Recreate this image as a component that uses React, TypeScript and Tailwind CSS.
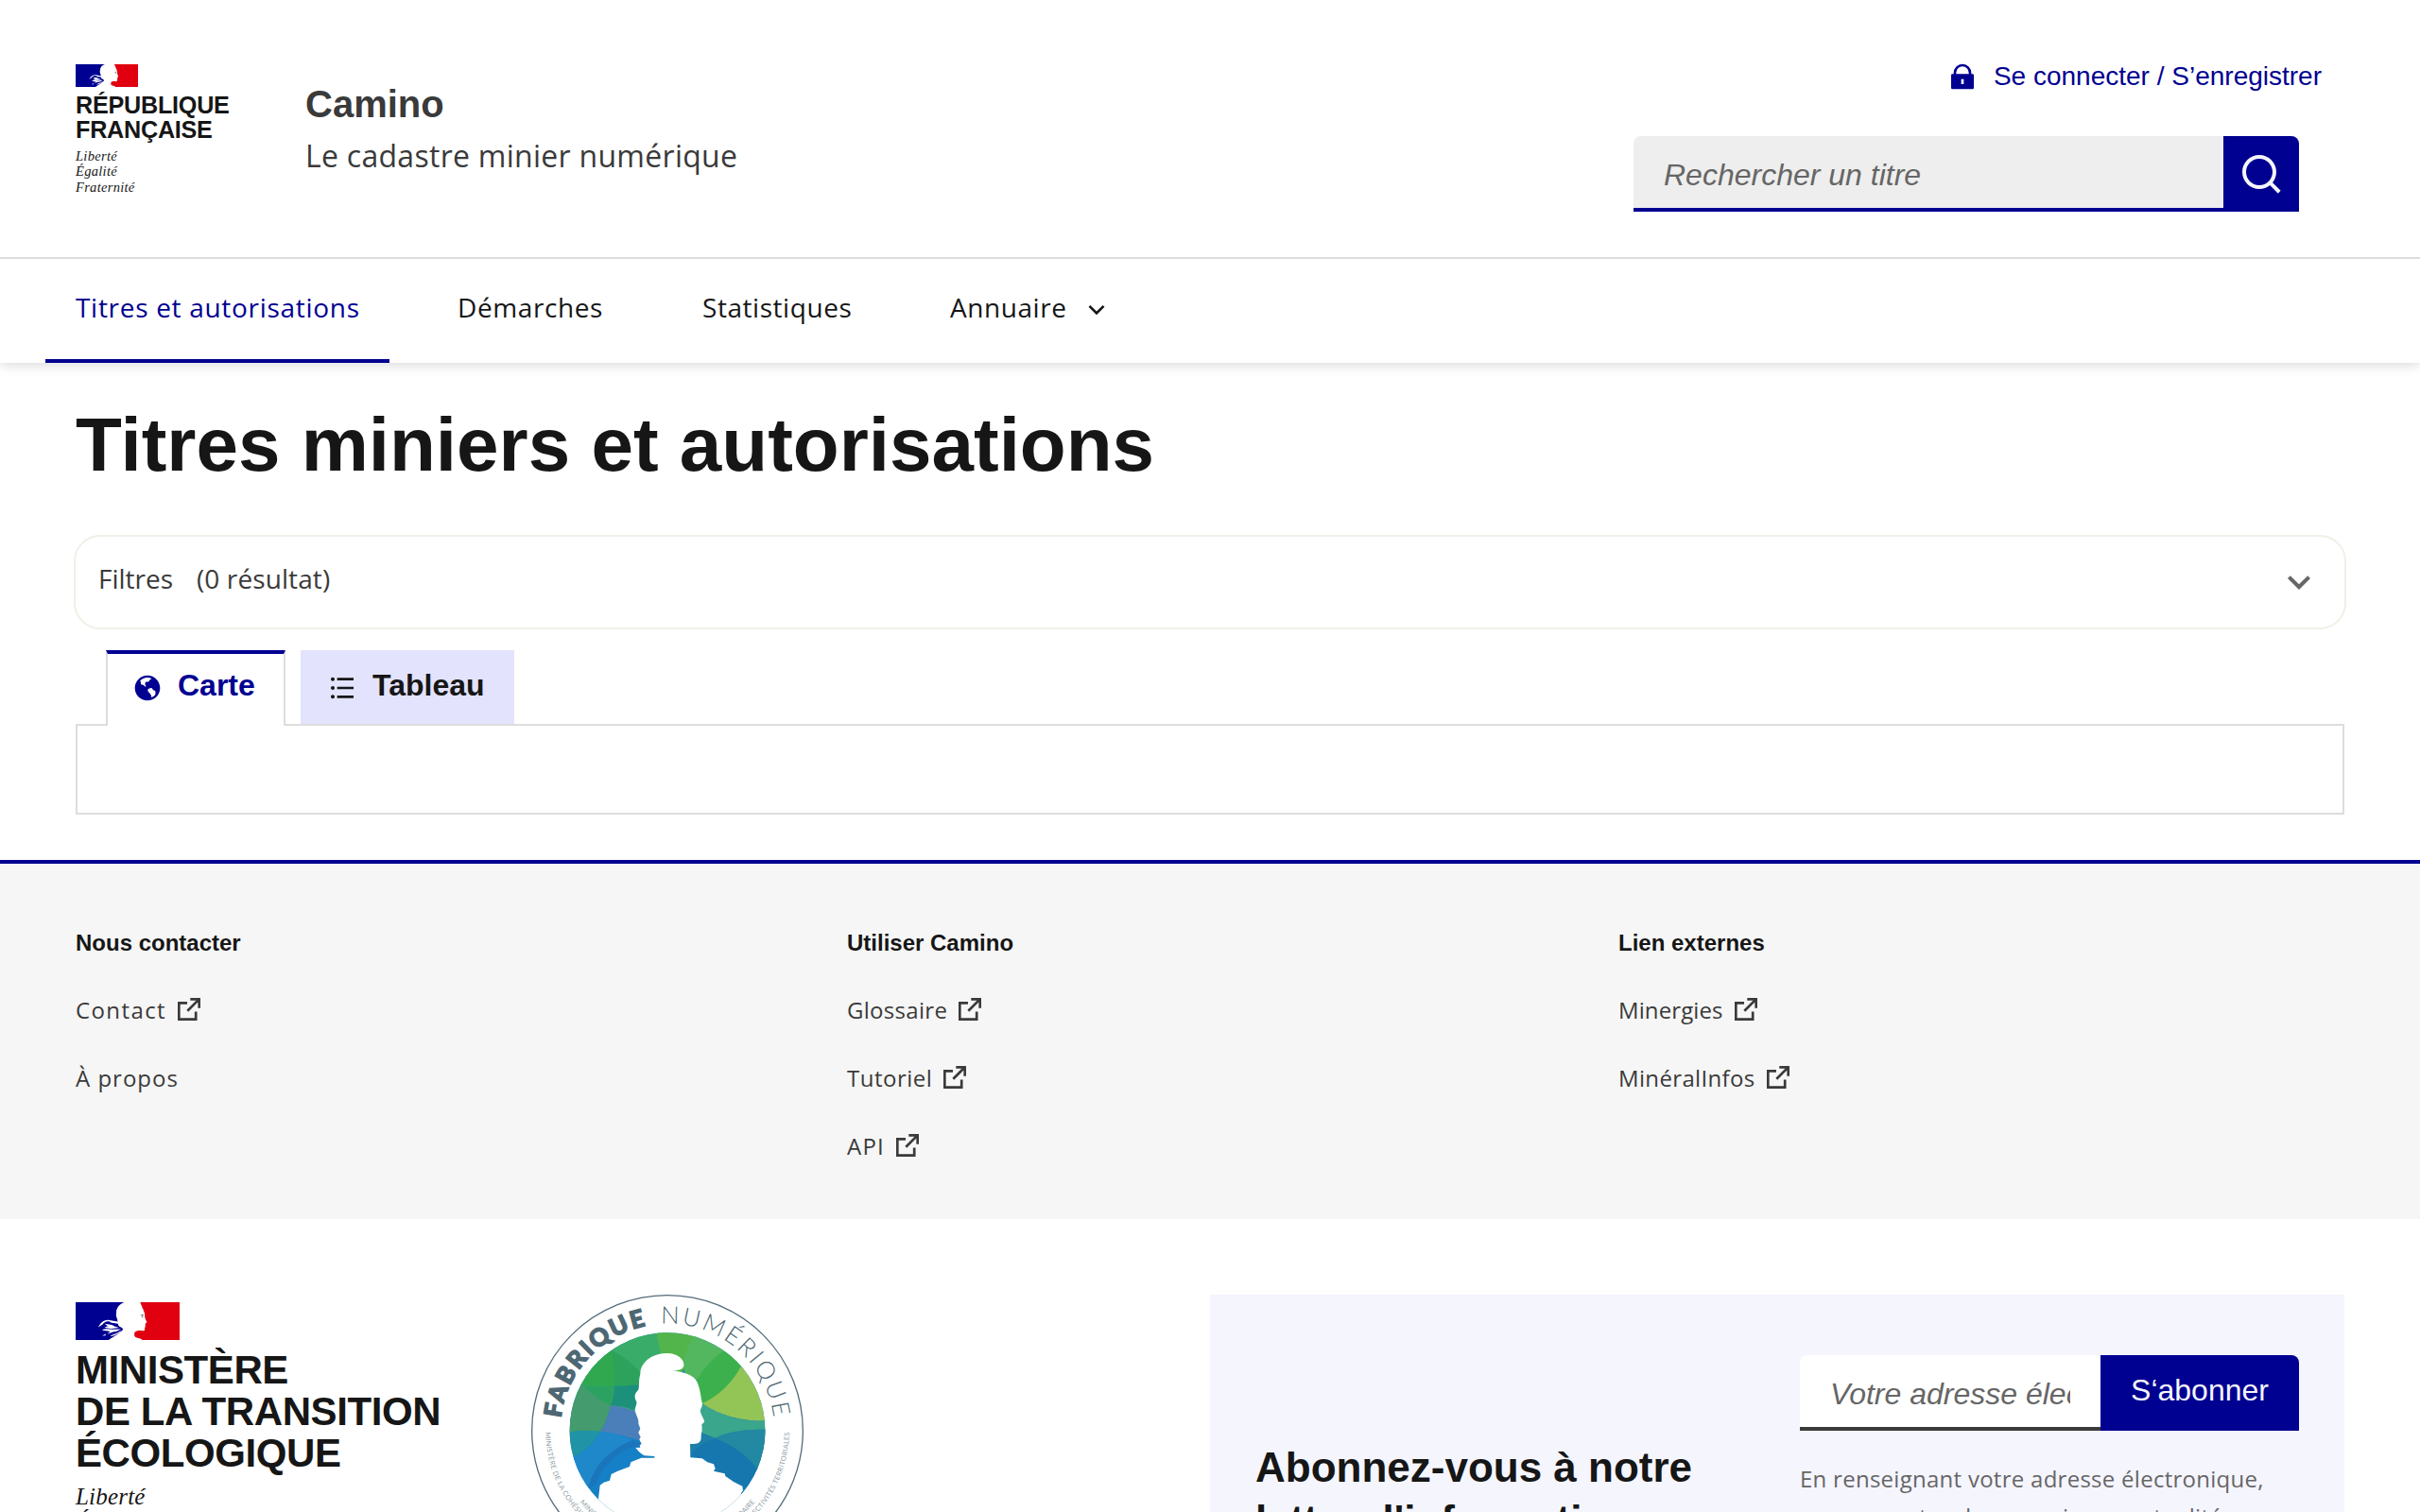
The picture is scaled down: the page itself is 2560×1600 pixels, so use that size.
import React from "react";
import { RiArrowDownSLine, RiEarthFill, RiListUnordered, RiSearchLine } from "react-icons/ri";

function Marianne({ className }: { className: string }) {
  return (
    <svg viewBox="0 0 110 40" className={className} aria-hidden="true">
      <path fill="#000091" d="M0 0H52L60 20L50 40H0Z" />
      <path fill="#e1000f" d="M66 0H110V40H58V20Z" />
      <path
        fill="#fff"
        d="M51.5 0C48 1.5 45 3.500 44 6.500C42.500 9 43.500 10.500 42.800 13C42.500 15.500 44.500 17.500 44.300 19.500C45.500 22.500 44 24.500 47 26C49 27 50.500 28 50 28.800C48 32.500 40 36.500 35 40H70.500C69.500 38.500 67 38.300 64.500 37.500C61.500 36.800 62 33.500 62.500 31.800C64 29.800 68 29.800 70.500 30.300C73.500 30.500 73.500 29 73 27.500C73.200 26.500 74.200 26 73.600 25C74 24 73.600 23 74 22.300C76 21.800 75 20.500 74.400 19C73 16.500 73.200 15 73.200 13C72.800 10.500 72 9 71.500 7.500C70 5.500 70.500 4.500 69.500 3C68.500 2 69.500 1 68 0Z"
      />
      <path
        fill="#fff"
        d="M24 26.500C26 22.500 29 18.500 34.500 18.700C38 19 42 20.500 45.500 20.500L46 23C42 22 38 22.500 36 20.500C33 19.500 30 21 28.500 23.500ZM30.500 22.500C34 24 37 22.500 41 25.500L46 27L38 28C35 27.500 33 27.800 30.500 26.500L34 25.500ZM28 29.500C32 27.300 35.500 29 40 28.700L48 28.500L43 31C39 31 37 32.500 33.500 33.500L36.500 31C33 30.300 31 30.500 28 29.500ZM28 35.500L32 33.500L31.500 35.300ZM37 35.500C40 34 45 32.500 48 30L47.500 31.500C44 34 41 35.500 37 36Z"
      />
      <path fill="#808080" d="M68.500 13.300L72 13V14L70.500 14.200L71.700 15.500L70 17L70.300 15.300Z" />
    </svg>
  );
}

function ExternalIcon() {
  return (
    <svg viewBox="0 0 24 24" className="mb-0.5 ml-3 size-6 shrink-0" fill="none" stroke="currentColor" strokeWidth="2.7" aria-hidden="true">
      <path d="M10 5.300H1.300V22.700H19.200V14.500M13.300 1.300H22.700V10.700M22.400 1.600L10.300 13.700" />
    </svg>
  );
}

function LockIcon() {
  return (
    <svg viewBox="0 0 24 24" className="size-8" fill="currentColor" aria-hidden="true">
      <path d="M19 10h1a1 1 0 0 1 1 1v10a1 1 0 0 1-1 1H4a1 1 0 0 1-1-1V11a1 1 0 0 1 1-1h1V9a7 7 0 1 1 14 0v1zm-2 0V9A5 5 0 0 0 7 9v1h10zm-6 4v4h2v-4h-2z" />
    </svg>
  );
}

function FabriqueLogo() {
  return (
    <svg viewBox="66 60 864 864" className="ml-[96px] size-[288px] shrink-0" role="img" aria-label="Fabrique numérique">
      <defs>
        <clipPath id="disc">
          <circle cx="498" cy="491" r="310" />
        </clipPath>
        <path id="arcTop" d="M158 492A340 340 0 0 1 838 492" />
        <path id="arcOuter" d="M111 492A387 387 0 0 0 885 492" />
        <path id="arcInner" d="M139 492A359 359 0 0 0 857 492" />
      </defs>
      <circle cx="498" cy="492" r="430" fill="none" stroke="#546e7a" strokeWidth="4" />
      <g clipPath="url(#disc)">
        <rect x="180" y="170" width="640" height="640" fill="#1580c2" />
        <path fill="#3aac6a" d="M180 170H500V430H180Z" />
        <path fill="#52b54b" d="M462 170H600L540 320L490 290C478 250 470 220 464 181Z" />
        <path fill="#52b75f" d="M586 170H830V330H560L548 290C552 250 565 215 586 193Z" />
        <path fill="#3cb04c" d="M680 236C640 260 600 310 580 350L608 405L640 420L732 290L740 200Z" />
        <path fill="#93c456" d="M608 406C660 380 700 345 730 290L820 260V460C740 465 665 445 608 406Z" />
        <path fill="#3aa68b" d="M580 405H608C665 445 740 465 810 460V492C735 490 680 500 640 520L590 505Z" />
        <path fill="#1f7fa6" d="M560 500L606 498L650 515C700 490 760 488 812 488V620L780 618Z" />
        <path fill="#2388a2" d="M650 517C700 492 760 488 812 488V620L785 614C750 570 700 535 650 517Z" />
        <path fill="#1577ae" d="M560 580C585 545 615 528 650 517C705 538 750 570 785 616L750 700H560Z" />
        <path fill="#1f7fa6" d="M560 500L606 498L650 517C615 528 585 545 560 580Z" />
        <path fill="#2fa84f" d="M180 350V180L322 238C345 300 332 345 322 352C290 350 255 350 228 345Z" />
        <path fill="#2ca25c" d="M322 238C360 255 395 285 420 315V345C385 348 350 350 328 352C334 315 332 275 322 238Z" />
        <path fill="#1c907a" d="M328 350C350 350 380 348 420 345V440C385 420 350 413 318 412C326 390 330 370 328 350Z" />
        <path fill="#449b6e" d="M228 345C245 365 280 395 318 412C310 445 300 475 285 495C250 490 210 492 180 498V345Z" />
        <path fill="#2ca262" d="M228 345C260 352 295 352 328 350C330 372 326 392 318 412C280 395 250 370 228 345Z" />
        <path fill="#4a7fb9" d="M318 412C355 415 385 425 420 440V525C380 515 340 500 285 495C300 475 310 445 318 412Z" />
        <path fill="#2094a6" d="M180 498C215 490 250 490 285 495C265 530 235 562 200 575L180 560Z" />
        <path fill="#1f88cb" d="M285 495C325 500 355 505 388 522C330 550 265 600 245 680L180 620L200 575C240 560 268 530 285 495Z" />
        <path fill="#1b75ba" d="M388 522L425 535V590L300 640L245 680C262 600 320 548 388 522Z" />
        <path fill="#1580c8" d="M398 540L425 560V590L300 640L265 690C275 620 330 560 398 540Z" />
        <path
          fill="#fff"
          d="M412 312C412 278 445 247 495 246C535 245 553 270 550 286C546 302 525 302 506 299C535 303 570 308 588 330C602 352 603 380 608 402C612 415 600 425 603 432C606 445 615 455 615 463C614 470 606 468 607 476C610 482 606 486 608 492C606 500 605 505 605 512C605 530 595 535 570 534L571 577L608 580L625 592L645 598L650 612L645 620L680 628L682 636L708 654L736 668L738 682L732 690L760 830H240L279 708L284 665L296 656L315 650L320 630L340 620L378 606L382 592L415 578L457 578V573L425 571C410 563 402 552 397 546L412 545L410 538L416 534L409 520L413 512L406 498L412 485L406 470C408 455 400 445 396 432C392 420 402 412 400 400C392 385 394 375 402 367C412 360 404 340 412 312Z"
        />
      </g>
      <path d="M279 708A310 310 0 0 0 735 692" fill="none" stroke="#d9dee0" strokeWidth="1" />
      <g fill="#4d6773">
        <text fontFamily="Lato, sans-serif" fontWeight="900" fontSize="77" stroke="#4d6773" strokeWidth="4" textLength="425" lengthAdjust="spacing">
          <textPath href="#arcTop" startOffset="40" textLength="425" lengthAdjust="spacing">FABRIQUE</textPath>
        </text>
        <text fontFamily="Lato, sans-serif" fontWeight="300" fontSize="77" textLength="512" lengthAdjust="spacing">
          <textPath href="#arcTop" startOffset="513" textLength="512" lengthAdjust="spacing">NUMÉRIQUE</textPath>
        </text>
      </g>
      <g fill="#8f9da4" fontFamily="Lato, sans-serif" fontSize="22">
        <text textLength="1205" lengthAdjust="spacing">
          <textPath href="#arcOuter" startOffset="5" textLength="1205" lengthAdjust="spacing">
            MINISTÈRE DE LA COHÉSION DES TERRITOIRES ET DES RELATIONS AVEC LES COLLECTIVITÉS TERRITORIALES
          </textPath>
        </text>
        <text textLength="636" lengthAdjust="spacing">
          <textPath href="#arcInner" startOffset="246" textLength="636" lengthAdjust="spacing">
            MINISTÈRE DE LA TRANSITION ÉCOLOGIQUE ET SOLIDAIRE
          </textPath>
        </text>
      </g>
    </svg>
  );
}

const body = "font-['Open_Sans',sans-serif]";

type FooterLink = { label: string; external: boolean; spacing: string };

const columns: { title: string; links: FooterLink[] }[] = [
  {
    title: "Nous contacter",
    links: [
      { label: "Contact", external: true, spacing: "tracking-[1.4px]" },
      { label: "À propos", external: false, spacing: "tracking-[1px]" },
    ],
  },
  {
    title: "Utiliser Camino",
    links: [
      { label: "Glossaire", external: true, spacing: "tracking-[0.3px]" },
      { label: "Tutoriel", external: true, spacing: "tracking-[0.5px]" },
      { label: "API", external: true, spacing: "tracking-[1.2px]" },
    ],
  },
  {
    title: "Lien externes",
    links: [
      { label: "Minergies", external: true, spacing: "tracking-[0.1px]" },
      { label: "MinéralInfos", external: true, spacing: "tracking-[0.35px]" },
    ],
  },
];

function Header() {
  return (
    <header className="flex h-[274px] items-start border-b-2 border-[#dddddd] pl-20 pr-[104px]">
      <div className="mt-[68px] w-[243px] shrink-0 text-[#161616]">
        <Marianne className="h-6 w-[66px]" />
        <p className="mt-1.5 text-[25.2px] font-bold leading-[26px] tracking-[-0.252px]">
          RÉPUBLIQUE
          <br />
          FRANÇAISE
        </p>
        <p className="mt-[7px] font-['Liberation_Serif',serif] text-[14.5px] italic leading-[16.300px] tracking-[0.3px]">
          Liberté
          <br />
          Égalité
          <br />
          Fraternité
        </p>
      </div>
      <div className="mt-[82px] text-[#3a3a3a]">
        <p className="text-[40px] font-bold leading-[56px]">Camino</p>
        <p className={`${body} mt-[3px] text-[32px] leading-[48px] tracking-[0.28px]`}>Le cadastre minier numérique</p>
      </div>
      <div className="ml-auto mt-[57px] flex flex-col items-end">
        <a className="flex items-center gap-[17px] text-[28px] leading-[48px] text-[#000091]">
          <LockIcon />
          Se connecter / S’enregistrer
        </a>
        <div className="mr-6 mt-[39px] flex h-20 w-[704px] overflow-hidden rounded-t-lg">
          <div className="flex-1 border-b-4 border-[#000091] bg-[#eeeeee] pl-8 text-[32px] italic leading-[82px] text-[#666666]">
            Rechercher un titre
          </div>
          <button className="flex w-20 items-center justify-center bg-[#000091] text-[#f5f5fe]">
            <RiSearchLine className="size-12" />
          </button>
        </div>
      </div>
    </header>
  );
}

function Nav() {
  return (
    <nav className={`${body} relative flex h-[110px] gap-10 bg-white pl-12 text-[28px] leading-[103px] text-[#161616] shadow-[0_2px_12px_rgba(0,0,18,0.16)] [clip-path:inset(0_0_-20px_0)]`}>
      <a className="w-[364px] whitespace-nowrap border-b-4 border-[#000091] pl-8 tracking-[0.7px] text-[#000091]">Titres et autorisations</a>
      <a className="w-[218px] pl-8 tracking-[0.600px]">Démarches</a>
      <a className="w-[222px] pl-[33px] tracking-[0.55px]">Statistiques</a>
      <a className="flex pl-[33px] tracking-[0.55px]">
        Annuaire
        <RiArrowDownSLine className="ml-4 mt-[38px] size-8" />
      </a>
    </nav>
  );
}

function Footer() {
  return (
    <footer>
      <div className="mt-12 grid h-[380px] grid-cols-3 gap-x-12 border-t-4 border-[#000091] bg-[#f6f6f6] px-20 pt-16">
        {columns.map((c) => (
          <div key={c.title}>
            <h3 className="text-2xl font-bold leading-10 text-[#161616]">{c.title}</h3>
            <ul className={`${body} mt-[31px] flex flex-col gap-8 text-2xl leading-10 text-[#3a3a3a]`}>
              {c.links.map((l) => (
                <li key={l.label} className="flex h-10 items-center">
                  <span className={l.spacing}>{l.label}</span>
                  {l.external && <ExternalIcon />}
                </li>
              ))}
            </ul>
          </div>
        ))}
      </div>
      <div className="mt-20 flex items-start px-20">
        <div className="mt-2 w-[386px] shrink-0 text-[#161616]">
          <Marianne className="h-10 w-[110px]" />
          <p className="mt-2.5 whitespace-nowrap text-[42px] font-bold leading-[44px] tracking-[-0.42px]">
            MINISTÈRE
            <br />
            DE LA TRANSITION
            <br />
            ÉCOLOGIQUE
          </p>
          <p className="mt-2.5 font-['Liberation_Serif',serif] text-[25px] italic leading-[27px] tracking-[0.2px]">
            Liberté
            <br />
            Égalité
            <br />
            Fraternité
          </p>
        </div>
        <FabriqueLogo />
        <section className="ml-auto flex h-[400px] w-[1200px] items-start justify-between bg-[#f5f5fe] px-12">
          <h2 className="mt-[155px] text-[44px] font-bold leading-[56px] text-[#161616]">
            Abonnez-vous à notre
            <br />
            lettre d'information
          </h2>
          <div className="mt-16 w-[528px]">
            <div className="flex h-20 overflow-hidden rounded-t-lg text-[32px]">
              <div className="w-[318px] border-b-4 border-[#3a3a3a] bg-white px-8 italic leading-[82px] text-[#666666]">
                <div className="overflow-hidden whitespace-nowrap">Votre adresse électronique</div>
              </div>
              <button className="flex-1 bg-[#000091] pb-1.5 leading-[74px] text-[#f5f5fe]">S‘abonner</button>
            </div>
            <p className={`${body} mt-[31px] whitespace-nowrap text-2xl leading-10 tracking-[0.27px] text-[#666666]`}>
              En renseignant votre adresse électronique,
              <br />
              vous acceptez de recevoir nos actualités
            </p>
          </div>
        </section>
      </div>
    </footer>
  );
}

export default function App() {
  return (
    <div className="h-[1600px] w-[2560px] overflow-hidden bg-white font-['Liberation_Sans',Arial,sans-serif]">
      <Header />
      <Nav />
      <main className="px-20 pt-[39px]">
        <h1 className="text-[80px] font-bold leading-[96px] text-[#161616]">Titres miniers et autorisations</h1>
        <div className={`${body} -mx-0.5 mt-[47px] flex h-[100px] items-start rounded-[28px] border-2 border-[#f0f0e8] px-6 text-[28px] leading-[48px] text-[#3a3a3a]`}>
          <span className="mt-5 w-[104px]">Filtres</span>
          <span className="mt-5 tracking-[0.1px]">(0 résultat)</span>
          <svg viewBox="0 0 24 24" className="ml-auto mt-6 size-12 text-[#666666]" fill="currentColor" aria-hidden="true">
            <path d="M16.590 8.590L12 13.170 7.410 8.590 6 10l6 6 6-6z" />
          </svg>
        </div>
        <div className="relative z-10 -mb-0.5 mt-[22px] flex gap-4 pl-8 text-[32px] font-bold leading-[48px]">
          <div className="flex h-20 w-[190px] items-start gap-4 border-x-2 border-t-4 border-x-[#dddddd] border-t-[#000091] bg-white pl-[26px] pt-[9px] text-[#000091]">
            <RiEarthFill className="mt-[11px] size-8 shrink-0" />
            Carte
          </div>
          <div className="flex h-[78px] w-[226px] items-start gap-4 bg-[#e3e3fd] pl-7 pt-[13px] text-[#161616]">
            <RiListUnordered className="mt-[11px] size-8 shrink-0" />
            Tableau
          </div>
        </div>
        <div className="h-24 border-2 border-[#dddddd]" />
      </main>
      <Footer />
    </div>
  );
}
